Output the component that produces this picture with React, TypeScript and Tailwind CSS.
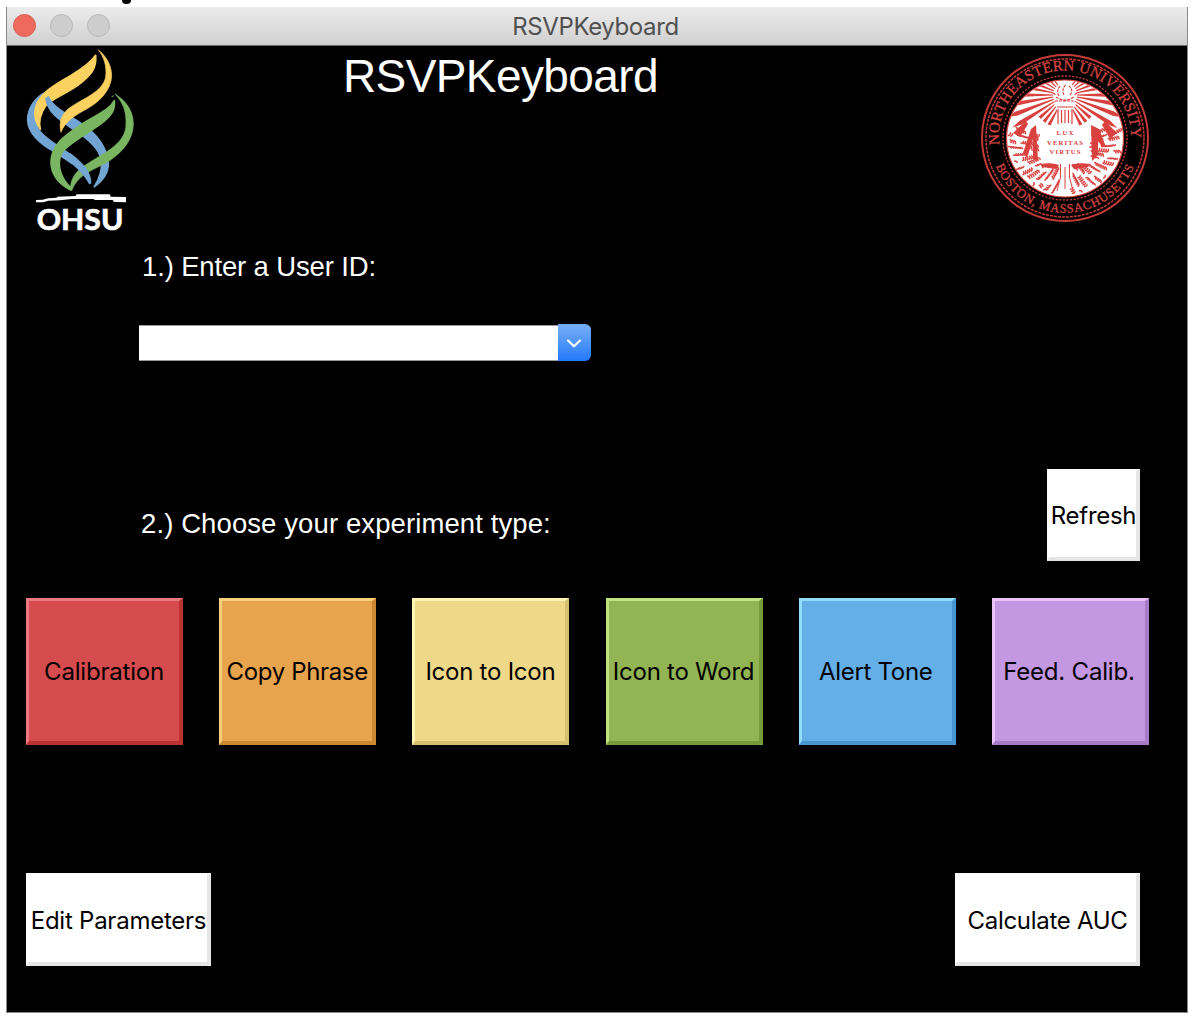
const RED = "#d9413f";

function OhsuLogo() {
  return (
    <svg className="mt-[2px] ml-[18px] h-[195px] w-[110px] shrink-0" viewBox="75 144 330 585">
      <g strokeLinejoin="round" strokeWidth="5">
        <path
          fill="#73a5d4"
          stroke="#73a5d4"
          d="M138 277 C105 292 83 325 83 360 C84 400 122 433 160 453 C182 466 200 480 215 490 L222 472 C180 437 112 412 106 360 C105 325 122 300 138 277Z"
        />
        <path
          fill="#fbd160"
          stroke="#fbd160"
          d="M287 166 C272 188 250 204 215 225 C170 250 112 282 105 330 C102 355 110 372 121 387 C116 368 117 347 137 317 C155 294 204 281 245 247 C274 224 290 204 287 166Z"
        />
        <path
          fill="#73a5d4"
          stroke="#73a5d4"
          d="M138 296 L145 291 C158 320 200 342 240 368 C290 400 320 440 325 490 C325 522 305 545 283 560 C297 538 308 515 304 480 C298 447 260 414 226 392 C186 364 143 340 138 296Z"
        />
        <path
          fill="#fbd160"
          stroke="#fbd160"
          strokeWidth="2"
          d="M295 150 C312 163 335 190 335 228 C333 270 300 304 265 324 C225 346 195 364 183 397 C178 375 178 350 205 326 C250 294 310 275 317 230 C321 200 312 170 295 150Z"
        />
        <path
          fill="#7ab662"
          stroke="#7ab662"
          strokeWidth="2"
          d="M345 282 C375 300 400 330 400 372 C399 430 352 470 312 492 C270 514 234 525 215 572 C208 560 213 528 243 505 C298 463 380 438 378 370 C379 330 367 305 345 282Z"
        />
        <path fill="#73a5d4" stroke="#73a5d4" strokeWidth="2" d="M185 468 C215 488 252 520 268 552 L273 550 C275 520 250 488 210 460Z" />
        <path
          fill="#7ab662"
          stroke="#7ab662"
          d="M343 302 C345 328 337 344 312 364 C272 397 205 427 184 460 C167 500 187 540 215 566 L212 570 C180 553 153 525 153 485 C155 430 202 402 240 376 C288 344 325 334 343 302Z"
        />
        <path fill="#7ab662" d="M333 289 l8 -3 l-2 5Z" />
      </g>
      <path fill="#fff" d="M108 600 L128 599 L145 595 L170 593 L172 590 L226 588 L230 583 L330 583 L332 590 L378 591 L378 607 L342 606 L338 600 L285 600 L280 597 L215 597 L180 601 L145 602 L130 607 L108 607Z" />
      <text x="110" y="690" fill="#fff" stroke="#fff" strokeWidth="2" fontFamily="Lato, sans-serif" fontWeight="700" fontSize="86" textLength="260" lengthAdjust="spacingAndGlyphs">
        OHSU
      </text>
    </svg>
  );
}

const RAYS = [-122, -111, -100, -90, -79, -69, -58, -47, -36, 36, 47, 58, 69, 79, 90, 100, 111, 122];

const LEAVES = Array.from({ length: 260 }, (_, i) => {
  const side = i % 2 ? 1 : -1;
  const u = ((i * 37) % 131) / 131;
  const v = ((i * 53) % 29) / 29;
  const angle = -0.2 + u * 1.68;
  const r = 26 + v * 31;
  return { x: 85 + side * Math.cos(angle) * r, y: 85 + Math.sin(angle) * r, turn: (i * 47) % 180 };
}).filter((l) => !(Math.abs(l.x - 85) < 26 && l.y < 112) && Math.abs(l.x - 85) > 6);

function UniversitySeal() {
  return (
    <svg className="mt-[7px] mr-[37px] ml-auto h-[170px] w-[170px] shrink-0" viewBox="0 0 170 170">
      <defs>
        <path id="seal-top" d="M19.5 91.5 A66 66 0 1 1 150.5 91.5" />
        <path id="seal-bottom" d="M15.5 112 A74.5 74.5 0 0 0 154.5 112" />
        <clipPath id="seal-disc">
          <circle cx="85" cy="85.5" r="58" />
        </clipPath>
      </defs>
      <g fill="none" stroke="#c33b39">
        <circle cx="85" cy="85" r="83" strokeWidth="2" />
        <circle cx="85" cy="85" r="79" strokeWidth="1.5" strokeDasharray="3 1" />
        <circle cx="85" cy="85" r="62" strokeWidth="1.3" strokeDasharray="2.2 1.4" />
      </g>
      <g fill="#cf4340" stroke="#cf4340" strokeWidth="0.35" fontFamily="'Liberation Serif', serif">
        <text fontSize="15">
          <textPath href="#seal-top" textLength="217" lengthAdjust="spacing">
            NORTHEASTERN UNIVERSITY
          </textPath>
        </text>
        <text fontSize="12.5">
          <textPath href="#seal-bottom" startOffset="1" textLength="176" lengthAdjust="spacing">
            BOSTON, MASSACHUSETTS
          </textPath>
        </text>
      </g>
      <circle cx="85" cy="85.5" r="58.5" fill="#fff" stroke={RED} strokeWidth="1.2" />
      <g clipPath="url(#seal-disc)">
        <g fill={RED}>
          {RAYS.map((a) => (
            <path key={a} d="M-0.5 -12 L0.5 -12 L2.2 -52 L0.4 -62 L-2.2 -52Z" transform={`translate(85 42) rotate(${a})`} />
          ))}
          {[-152, -142, -132, 132, 142, 152].map((a) => (
            <path key={a} d="M-0.4 -14 L0.4 -14 L1.7 -34 L-1.7 -34Z" transform={`translate(85 42) rotate(${a})`} />
          ))}
          <path d="M56 72 L51 76 L43 100 L47 105 L53 86 L53 106 L58 108 L57 90Z" />
          <path d="M111 72 L119 76 L126 94 L121 93 L118 86 L118 102 L112 108Z" />
          <path d="M33 80 L46 68 L48 71 L40 84Z M137 80 L125 68 L122 72 L130 86Z" />
        </g>
        <g fill="none" stroke={RED} strokeWidth="1.4">
          {LEAVES.map((l, i) => (
            <path key={i} d="M-2 0 Q0 -2 2 0" transform={`translate(${l.x.toFixed(1)} ${l.y.toFixed(1)}) rotate(${l.turn})`} />
          ))}
        </g>
        <path d="M74 50 H96 L93 56 V72 H77 V56Z" fill="#fff" />
        <g fill="none" stroke={RED} strokeWidth="1.2">
          <path d="M77 54 H93 M78 56 V71 M81.5 57 V70 M85 57 V70 M88.5 57 V70 M92 56 V71" />
          <path d="M75 48 H95 M76 44 Q85 50 94 44 M79 43 Q76 38 80 33 M84 42 Q81 37 86 31 M90 42 Q94 37 89 33 M73 40 l3 2 M97 40 l-3 2" strokeDasharray="3 1" />
        </g>
        <path d="M61 75 Q73 70 85 74 Q97 70 109 75 V110 Q97 106 85 110 Q73 106 61 110Z" fill="#fff" />
        <path d="M60 111 Q72 109 79 112 L76 116 L62 114Z M110 111 Q98 109 91 112 L94 116 L108 114Z" fill={RED} />
        <path d="M80.5 111 H89.5 L88.5 142 H81.5Z" fill="#fff" />
        <path d="M80.5 111 V124 L77 138 M89.5 111 V124 L93 138 M85 114 V136" fill="none" stroke={RED} strokeWidth="1" />
      </g>
      <g fill={RED} fontFamily="'Liberation Serif', serif" fontWeight="700" fontSize="6.6" textAnchor="middle">
        <text x="85" y="82" textLength="17">LUX</text>
        <text x="85" y="91.5" textLength="36">VERITAS</text>
        <text x="85" y="101" textLength="31">VIRTUS</text>
      </g>
    </svg>
  );
}

const EXPERIMENTS = [
  { label: "Calibration", tone: "bg-[#d64b4d] border-t-[#ec797f] border-l-[#ec797f] border-r-[#bb332e] border-b-[#bb332e] tracking-[-0.2px]" },
  { label: "Copy Phrase", tone: "bg-[#e8a44c] border-t-[#f9d079] border-l-[#f9d079] border-r-[#cd8832] border-b-[#cd8832] tracking-[-0.35px]" },
  { label: "Icon to Icon", tone: "bg-[#efd888] border-t-[#fff4b4] border-l-[#fff4b4] border-r-[#d6bf6e] border-b-[#d6bf6e] tracking-[-0.25px]" },
  { label: "Icon to Word", tone: "bg-[#92b453] border-t-[#bfe17f] border-l-[#bfe17f] border-r-[#759b36] border-b-[#759b36] tracking-[-0.25px]" },
  { label: "Alert Tone", tone: "bg-[#64afe8] border-t-[#91ddfa] border-l-[#91ddfa] border-r-[#4795d1] border-b-[#4795d1] tracking-[-0.3px] pr-[2px]" },
  { label: "Feed. Calib.", tone: "bg-[#c397e1] border-t-[#edc2f8] border-l-[#edc2f8] border-r-[#a87bc6] border-b-[#a87bc6] tracking-[-0.2px] pr-[2px]" },
];

const WHITE_BUTTON =
  "flex items-center justify-center whitespace-nowrap bg-white border-t-2 border-l-2 border-r-4 border-b-4 border-t-[#fbfbfb] border-l-white border-r-[#e6e6e6] border-b-[#e6e6e6] pt-[4px] pl-[2px] text-[24px] leading-none text-black";

export default function App() {
  return (
    <div className="h-[1020px] w-[1193px] overflow-hidden bg-white font-['Inter',sans-serif]">
      <div className="h-[7px] pl-[122px]">
        <div className="h-1 w-[9px] rounded-b-full bg-black" />
      </div>
      <div className="ml-[6px] h-[1006px] w-[1182px] border-r border-b border-l border-[#8a8a8a] bg-black">
        <div className="relative flex h-[39px] items-center justify-center border-b border-[#6a6a6a] bg-linear-to-b from-[#ececec] to-[#d0d0d0]">
          <div className="absolute top-[7px] left-[6px] flex gap-[14px]">
            <span className="size-[23px] rounded-full border border-[#dc5a50] bg-[#ee6a5e]" />
            <span className="size-[23px] rounded-full border border-[#b9b9b9] bg-[#cdcdcd]" />
            <span className="size-[23px] rounded-full border border-[#b9b9b9] bg-[#cdcdcd]" />
          </div>
          <span className="mt-[2px] mr-[3px] text-[24px] leading-none tracking-[-0.4px] text-[#505050]">RSVPKeyboard</span>
        </div>

        <header className="flex h-[189px] items-start">
          <OhsuLogo />
          <h1 className="mt-[7px] ml-[208px] font-['Liberation_Sans',sans-serif] text-[46px] leading-none tracking-[-0.6px] text-white">
            RSVPKeyboard
          </h1>
          <UniversitySeal />
        </header>

        <section className="h-[234px] pt-[17px] pl-[132px]">
          <label className="block pl-[3px] font-['Liberation_Sans',sans-serif] text-[27.5px] leading-[29px] tracking-[-0.15px] text-white">
            1.) Enter a User ID:
          </label>
          <div className="mt-[43px] flex items-center">
            <div className="h-[36px] w-[419px] border-y border-[#999] bg-white" />
            <button className="flex h-[37px] w-[33px] items-center justify-center rounded-r-[6px] border-t border-[#6ea5e6] bg-linear-to-b from-[#74aef6] to-[#1f78fb] pr-[1px]">
              <svg className="size-[16px]" viewBox="0 0 16 16" fill="none" stroke="#fff" strokeWidth="2.2" strokeLinecap="round" strokeLinejoin="round">
                <path d="M2 5.5 L8 11.3 L14 5.5" />
              </svg>
            </button>
          </div>
        </section>

        <section className="flex h-[129px] items-start justify-between pr-[47px] pl-[134px]">
          <h2 className="mt-[41px] font-['Liberation_Sans',sans-serif] text-[27.5px] leading-[28px] tracking-[0.1px] text-white">
            2.) Choose your experiment type:
          </h2>
          <button className={`${WHITE_BUTTON} h-[92px] w-[93px] tracking-[-0.3px]`}>Refresh</button>
        </section>

        <section className="flex h-[275px] items-start justify-between pr-[38px] pl-[19px]">
          {EXPERIMENTS.map((e) => (
            <button key={e.label} className={`flex h-[147px] w-[157px] items-center justify-center border-t-3 border-r-4 border-b-4 border-l-3 pt-[2px] text-[24px] leading-none whitespace-nowrap text-black ${e.tone}`}>
              {e.label}
            </button>
          ))}
        </section>

        <footer className="flex justify-between pr-[47px] pl-[19px]">
          <button className={`${WHITE_BUTTON} h-[93px] w-[185px] tracking-[-0.24px]`}>Edit Parameters</button>
          <button className={`${WHITE_BUTTON} h-[93px] w-[185px] tracking-[-0.3px]`}>Calculate AUC</button>
        </footer>
      </div>
    </div>
  );
}
